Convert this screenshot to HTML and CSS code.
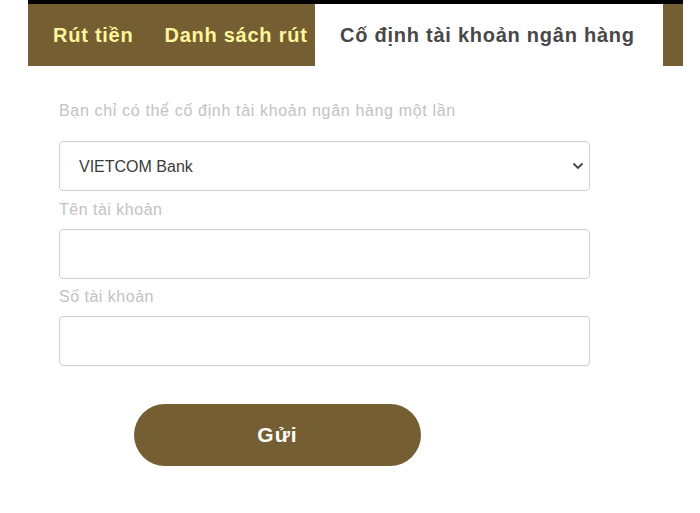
FILE: index.html
```html
<!DOCTYPE html>
<html lang="vi">
<head>
<meta charset="utf-8">
<title>Cố định tài khoản ngân hàng</title>
<link rel="stylesheet" href="styles.css">
</head>
<body>
<nav class="tabs">
  <a class="tab tab-first">Rút tiền</a>
  <a class="tab tab-second">Danh sách rút</a>
  <a class="tab tab-active">Cố định tài khoản ngân hàng</a>
</nav>
<form class="form">
  <p class="hint">Bạn chỉ có thể cố định tài khoản ngân hàng một lần</p>
  <div class="select-wrap">
    <select class="field select">
      <option>VIETCOM Bank</option>
    </select>
    <svg class="chevron" width="12" height="8" viewBox="0 0 12 8"><path d="M1.5 1.5 L6 6 L10.5 1.5" fill="none" stroke="#444" stroke-width="1.8"/></svg>
  </div>
  <label class="label">Tên tài khoản</label>
  <input class="field" type="text">
  <label class="label">Số tài khoản</label>
  <input class="field" type="text">
  <button class="submit" type="button">Gửi</button>
</form>
</body>
</html>
```
FILE: styles.css
```css
* { box-sizing: border-box; }
body {
  margin: 0;
  background: #fff;
  font-family: "Liberation Sans", Arial, sans-serif;
}
.tabs {
  display: flex;
  margin-left: 28px;
  width: 655px;
  height: 66px;
  border-top: 4px solid #000;
  background: #745e32;
}
.tab {
  display: flex;
  align-items: center;
  height: 62px;
  font-size: 20px;
  font-weight: bold;
  letter-spacing: 0.75px;
  color: #fff59d;
  white-space: nowrap;
}
.tab-first { padding: 0 25px 0 25px; }
.tab-second { padding: 0 6px 0 6px; }
.tab-active {
  background: #fff;
  color: #484848;
  padding: 0 25px;
  width: 348px;
  margin-left: auto;
  margin-right: 20px;
}
.form {
  display: flex;
  flex-direction: column;
  align-items: flex-start;
  margin-left: 59px;
  width: 531px;
}
.hint {
  margin: 34px 0 19px;
  line-height: 22px;
  font-size: 16px;
  letter-spacing: 0.66px;
  color: #c2c2c2;
}
.select-wrap {
  position: relative;
  width: 100%;
}
.field {
  display: block;
  width: 100%;
  height: 50px;
  border: 1px solid #cfcfcf;
  border-radius: 4px;
  background: #fff;
  font-family: "Liberation Sans", Arial, sans-serif;
  font-size: 16px;
  color: #3a3a3a;
  padding: 0 19px;
  outline: none;
}
.select {
  appearance: none;
  -webkit-appearance: none;
}
.chevron {
  position: absolute;
  right: 6px;
  top: 21px;
}
.label {
  display: block;
  margin: 7.5px 0 8px;
  line-height: 22px;
  font-size: 16px;
  letter-spacing: 0.5px;
  color: #c2c2c2;
}
.submit {
  margin: 38px 0 0 75px;
  width: 287px;
  height: 62px;
  border: 0;
  border-radius: 31px;
  background: #745e32;
  color: #fff;
  font-family: "Liberation Sans", Arial, sans-serif;
  font-size: 21px;
  font-weight: bold;
  letter-spacing: 1px;
}
```
